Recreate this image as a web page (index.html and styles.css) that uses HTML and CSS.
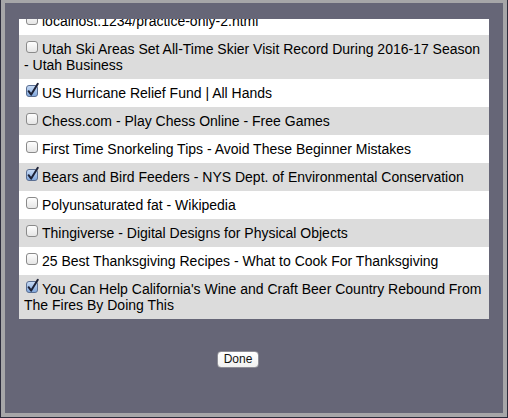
FILE: index.html
```html
<!DOCTYPE html>
<html>
<head>
<meta charset="utf-8">
<link rel="stylesheet" href="styles.css">
</head>
<body>
<div class="dialog">
  <div class="list">
    <div class="inner">
      <div class="row"><span class="cb"><svg width="12" height="12" viewBox="0 0 12 12"><defs><linearGradient id="g" x1="0" y1="0" x2="0" y2="1"><stop offset="0" stop-color="#ffffff"/><stop offset="1" stop-color="#e4e4e4"/></linearGradient></defs><rect x="0.5" y="0.5" width="11" height="11" rx="2.5" fill="url(#g)" stroke="#8a8a8a"/></svg></span>localhost:1234/practice-only-2.html</div>
      <div class="row alt"><span class="cb"><svg width="12" height="12" viewBox="0 0 12 12"><rect x="0.5" y="0.5" width="11" height="11" rx="2.5" fill="url(#g)" stroke="#8a8a8a"/></svg></span>Utah Ski Areas Set All-Time Skier Visit Record During 2016-17 Season - Utah Business</div>
      <div class="row"><span class="cb"><svg width="12" height="12" viewBox="0 0 12 12" overflow="visible"><defs><linearGradient id="b" x1="0" y1="0" x2="0" y2="1"><stop offset="0" stop-color="#c9dcf5"/><stop offset="1" stop-color="#7fa6dc"/></linearGradient></defs><rect x="0.5" y="0.5" width="11" height="11" rx="2.5" fill="url(#b)" stroke="#5b6f92"/><path d="M2.6 6.2 L5.2 9.6 L11.8 -1.2" fill="none" stroke="#1c2136" stroke-width="2" stroke-linecap="round" stroke-linejoin="round"/></svg></span>US Hurricane Relief Fund | All Hands</div>
      <div class="row alt"><span class="cb"><svg width="12" height="12" viewBox="0 0 12 12"><rect x="0.5" y="0.5" width="11" height="11" rx="2.5" fill="url(#g)" stroke="#8a8a8a"/></svg></span>Chess.com - Play Chess Online - Free Games</div>
      <div class="row"><span class="cb"><svg width="12" height="12" viewBox="0 0 12 12"><rect x="0.5" y="0.5" width="11" height="11" rx="2.5" fill="url(#g)" stroke="#8a8a8a"/></svg></span>First Time Snorkeling Tips - Avoid These Beginner Mistakes</div>
      <div class="row alt"><span class="cb"><svg width="12" height="12" viewBox="0 0 12 12" overflow="visible"><rect x="0.5" y="0.5" width="11" height="11" rx="2.5" fill="url(#b)" stroke="#5b6f92"/><path d="M2.6 6.2 L5.2 9.6 L11.8 -1.2" fill="none" stroke="#1c2136" stroke-width="2" stroke-linecap="round" stroke-linejoin="round"/></svg></span>Bears and Bird Feeders - NYS Dept. of Environmental Conservation</div>
      <div class="row"><span class="cb"><svg width="12" height="12" viewBox="0 0 12 12"><rect x="0.5" y="0.5" width="11" height="11" rx="2.5" fill="url(#g)" stroke="#8a8a8a"/></svg></span>Polyunsaturated fat - Wikipedia</div>
      <div class="row alt"><span class="cb"><svg width="12" height="12" viewBox="0 0 12 12"><rect x="0.5" y="0.5" width="11" height="11" rx="2.5" fill="url(#g)" stroke="#8a8a8a"/></svg></span>Thingiverse - Digital Designs for Physical Objects</div>
      <div class="row"><span class="cb"><svg width="12" height="12" viewBox="0 0 12 12"><rect x="0.5" y="0.5" width="11" height="11" rx="2.5" fill="url(#g)" stroke="#8a8a8a"/></svg></span>25 Best Thanksgiving Recipes - What to Cook For Thanksgiving</div>
      <div class="row alt"><span class="cb"><svg width="12" height="12" viewBox="0 0 12 12" overflow="visible"><rect x="0.5" y="0.5" width="11" height="11" rx="2.5" fill="url(#b)" stroke="#5b6f92"/><path d="M2.6 6.2 L5.2 9.6 L11.8 -1.2" fill="none" stroke="#1c2136" stroke-width="2" stroke-linecap="round" stroke-linejoin="round"/></svg></span>You Can Help California's Wine and Craft Beer Country Rebound From The Fires By Doing This</div>
    </div>
  </div>
  <div class="footer">
    <button class="done">Done</button>
  </div>
</div>
</body>
</html>
```
FILE: styles.css
```css
html, body {
  margin: 0;
  padding: 0;
  background: #2c2c3c;
  font-family: "Liberation Sans", Arial, sans-serif;
}
.dialog {
  box-sizing: border-box;
  width: 506px;
  height: 417px;
  margin: 0 1px 1px 1px;
  border: 4px solid #a6a6a8;
  border-top-width: 3px;
  background: #666677;
  padding: 16px 14px 0 14px;
}
.list {
  height: 300px;
  overflow: hidden;
  background: #ffffff;
}
.inner {
  margin-top: -12px;
}
.row {
  background: #ffffff;
  color: #000;
  font-size: 14px;
  line-height: 16px;
  padding: 6px 5px;
}
.row.alt {
  background: #dcdcdc;
}
.cb {
  display: inline-block;
  width: 12px;
  height: 12px;
  margin: 0 4px 0 2px;
  vertical-align: 1px;
}
.cb svg {
  display: block;
}
.footer {
  padding-top: 30px;
  padding-left: 198px;
}
.done {
  box-sizing: border-box;
  width: 42px;
  height: 17px;
  padding: 0;
  border: 1px solid #8e8e96;
  border-radius: 4px;
  background: linear-gradient(#ffffff, #f1f1f1);
  font-family: "Liberation Sans", Arial, sans-serif;
  font-size: 12px;
  line-height: 15px;
  color: #111;
}
```
